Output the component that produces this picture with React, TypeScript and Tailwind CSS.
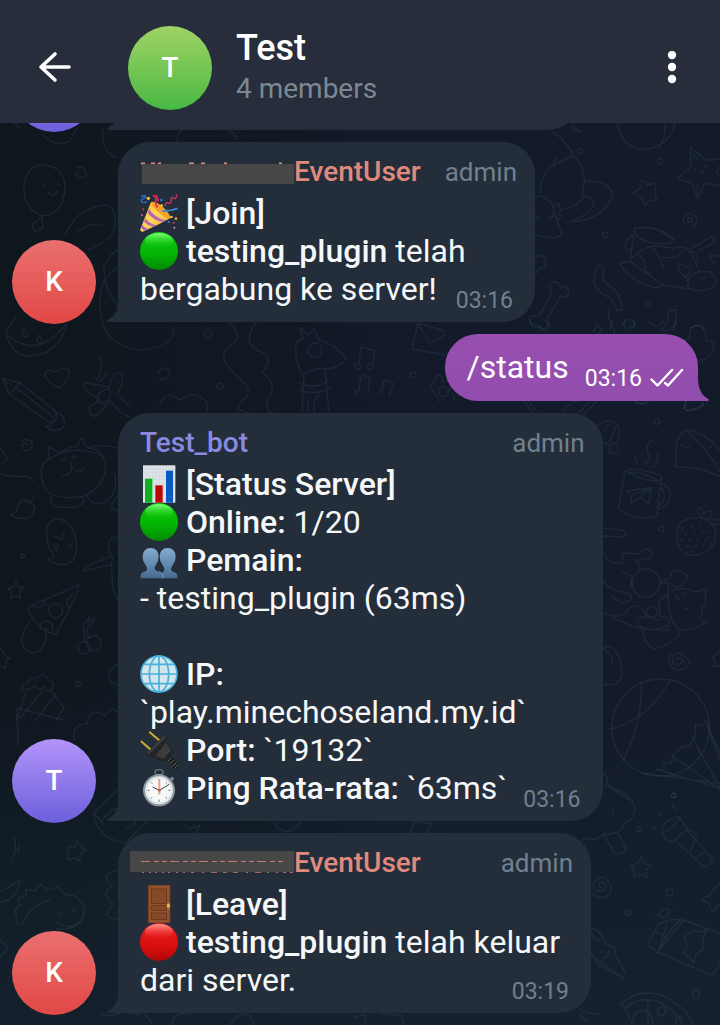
import type { ReactNode } from "react";

type AvatarTone = "red" | "violet" | "green";

const avatarTones: Record<AvatarTone, string> = {
  red: "from-[#ea6f6f] to-[#e14746]",
  violet: "from-[#b394f9] to-[#6d5fdb]",
  green: "from-[#9dd365] to-[#45b944]",
};

function Avatar({ letter, tone }: { letter: string; tone: AvatarTone }) {
  return (
    <div
      className={`flex size-21 shrink-0 items-center justify-center rounded-full bg-linear-to-b text-[28px] leading-8 font-medium text-white ${avatarTones[tone]}`}
    >
      {letter}
    </div>
  );
}

/* ---------- emoji ---------- */

function Emoji({ label, children }: { label: string; children: ReactNode }) {
  return (
    <svg role="img" aria-label={label} viewBox="0 0 114 114" className="mr-2 inline-block size-[38px] align-top">
      {children}
    </svg>
  );
}

function Party() {
  return (
    <Emoji label="party popper">
      <defs>
        <linearGradient id="cone" x1="0" y1="0" x2="1" y2="1">
          <stop offset="0" stopColor="#f7b92c" />
          <stop offset=".5" stopColor="#ffd75a" />
          <stop offset="1" stopColor="#e8961c" />
        </linearGradient>
      </defs>
      <path d="M33 24Q58 34 90 72Q70 86 8 113Q0 114 1 106Z" fill="url(#cone)" />
      <path d="M33 24Q48 20 72 42Q94 64 90 72Q82 78 58 57Q34 36 33 24Z" fill="#f0a22a" />
      <path d="M27 45Q45 72 76 79L68 84Q38 78 23 57ZM16 73Q28 89 48 94L39 99Q24 95 12 83ZM7 93Q13 101 24 105L15 110Q8 107 3 101Z" fill="#b565b8" />
      <path d="M52 41Q42 22 50 3M38 6Q52 4 55 22" stroke="#e8265e" strokeWidth="5" fill="none" />
      <path d="M67 51Q90 52 113 43" stroke="#3d83d8" strokeWidth="6" fill="none" />
      <path d="M3 8Q20 0 16 10Q0 18 5 24Q14 28 21 23" stroke="#2f74d4" strokeWidth="4" fill="none" />
      <path d="M75 37Q76 23 84 27Q90 32 94 21Q91 8 99 12Q109 18 111 2" stroke="#dc2d6d" strokeWidth="4" fill="none" />
      <circle cx="25" cy="13" r="5" fill="#f8c62e" />
      <circle cx="64" cy="18" r="4" fill="#2f74d4" />
      <circle cx="65" cy="35" r="4" fill="#f8c62e" />
      <circle cx="10" cy="46" r="3" fill="#e33d3d" />
      <circle cx="6" cy="63" r="3" fill="#d85bb2" />
      <circle cx="94" cy="69" r="4" fill="#f8c62e" />
      <circle cx="108" cy="74" r="4" fill="#e8a02a" />
      <circle cx="101" cy="86" r="3" fill="#e33d3d" />
      <circle cx="103" cy="101" r="3" fill="#d993dd" />
      <circle cx="86" cy="84" r="3" fill="#3d83d8" />
    </Emoji>
  );
}

function GreenDot() {
  return (
    <Emoji label="green circle">
      <defs>
        <linearGradient id="green-ball" x1="0" y1="0" x2="0" y2="1">
          <stop offset="0" stopColor="#0cc80c" />
          <stop offset=".55" stopColor="#02b602" />
          <stop offset="1" stopColor="#048a04" />
        </linearGradient>
        <linearGradient id="green-shine" x1="0" y1="0" x2="0" y2="1">
          <stop offset="0" stopColor="#7dff78" />
          <stop offset="1" stopColor="#0cc60c" stopOpacity="0" />
        </linearGradient>
      </defs>
      <circle cx="57" cy="57" r="57" fill="url(#green-ball)" />
      <ellipse cx="57" cy="27" rx="42" ry="24" fill="url(#green-shine)" />
    </Emoji>
  );
}

function RedDot() {
  return (
    <Emoji label="red circle">
      <defs>
        <linearGradient id="red-ball" x1="0" y1="0" x2="0" y2="1">
          <stop offset="0" stopColor="#ee1c1c" />
          <stop offset=".6" stopColor="#d90e0e" />
          <stop offset="1" stopColor="#b00808" />
        </linearGradient>
        <linearGradient id="red-shine" x1="0" y1="0" x2="0" y2="1">
          <stop offset="0" stopColor="#ff9a94" />
          <stop offset="1" stopColor="#ee2020" stopOpacity="0" />
        </linearGradient>
      </defs>
      <circle cx="57" cy="57" r="57" fill="url(#red-ball)" />
      <ellipse cx="57" cy="27" rx="42" ry="24" fill="url(#red-shine)" />
    </Emoji>
  );
}

function Chart() {
  return (
    <Emoji label="bar chart">
      <rect x="9" y="1" width="97" height="112" fill="#dfe5e8" />
      <path
        d="M19 1V113M29 1V113M39 1V113M49 1V113M59 1V113M69 1V113M79 1V113M89 1V113M99 1V113M9 11H106M9 22H106M9 33H106M9 44H106M9 55H106M9 66H106"
        stroke="#cbd5db"
        strokeWidth="2"
      />
      <rect x="15" y="41" width="22" height="72" fill="#0bb31f" />
      <rect x="46" y="61" width="22" height="52" fill="#bd0808" />
      <rect x="78" y="17" width="21" height="96" fill="#0a58c2" />
    </Emoji>
  );
}

function People() {
  return (
    <Emoji label="two people">
      <defs>
        <linearGradient id="bust" gradientUnits="userSpaceOnUse" x1="0" y1="20" x2="0" y2="112">
          <stop offset="0" stopColor="#86aed0" />
          <stop offset="1" stopColor="#446a90" />
        </linearGradient>
      </defs>
      <g fill="url(#bust)">
        <path d="M60 112H112V102Q110 95 98 92Q93 90 93 84Q94 78 98 73Q107 62 107 47Q106 21 83 21Q60 21 59 47Q59 62 68 73Q72 78 73 84Q73 90 68 92Z" />
        <path d="M2 112H72V102Q69 95 57 92Q46 90 44 84Q43 78 47 73Q56 62 56 47Q55 21 32 21Q9 21 8 47Q8 62 17 73Q21 78 21 84Q20 90 14 92Q3 95 2 102Z" />
      </g>
      <path d="M58 91L69 103V112" stroke="#9dbbd5" strokeWidth="2" fill="none" />
    </Emoji>
  );
}

function Globe() {
  return (
    <Emoji label="globe">
      <circle cx="57" cy="57" r="54" fill="#d3e6ec" />
      <circle cx="57" cy="57" r="54" fill="none" stroke="#4eb4dc" strokeWidth="5" />
      <g fill="none" stroke="#48b0da" strokeWidth="5">
        <path d="M57 2V112M4 57H110" />
        <ellipse cx="57" cy="57" rx="29" ry="54" />
        <path d="M13 28H101M13 86H101" />
      </g>
    </Emoji>
  );
}

function Plug() {
  return (
    <Emoji label="electric plug">
      <path d="M28 3L63 33M3 31L35 59" stroke="#c29a2d" strokeWidth="6" />
      <path d="M28 1L64 31M2 28L36 57" stroke="#efc95e" strokeWidth="2" />
      <path d="M75 10L18 69Q29 82 45 79L66 92Q78 94 84 85L99 70Q104 61 98 54L80 31Q84 20 75 10Z" fill="#242526" />
      <path d="M72 13L21 66L28 70L78 19ZM46 76L78 34L93 57L72 83Z" fill="#3b3c3d" />
      <path d="M81 87L93 75L114 100V113H104Z" fill="#191a1b" />
      <path d="M83 91L95 80M90 98L102 87M97 105L109 95M104 111L113 103" stroke="#6d6e70" strokeWidth="3" />
    </Emoji>
  );
}

function Stopwatch() {
  return (
    <Emoji label="stopwatch">
      <ellipse cx="57" cy="10" rx="12" ry="8" fill="none" stroke="#65747f" strokeWidth="4" />
      <path d="M50 15H64V23H50Z" fill="#a5b1b9" />
      <path d="M89 29L97 36L103 28L95 23Z" fill="#7b8992" />
      <circle cx="57" cy="64" r="45" fill="#e9edef" stroke="#8b989f" strokeWidth="6" />
      <circle cx="57" cy="64" r="38" fill="#f7f8f8" stroke="#c7ced2" strokeWidth="2" />
      <path d="M57 30V36M57 92V98M23 64H29M85 64H91M33 40L37 44M77 84L81 88M81 40L77 44M37 84L33 88" stroke="#66727a" strokeWidth="3" />
      <path d="M58 30V76" stroke="#eba190" strokeWidth="6" />
      <path d="M38 54L58 64L88 46" stroke="#3a4146" strokeWidth="3" fill="none" />
      <circle cx="58" cy="64" r="4" fill="#c95f4c" />
    </Emoji>
  );
}

function Door() {
  return (
    <Emoji label="door">
      <rect x="24" y="0" width="67" height="113" fill="#7c4425" />
      <rect x="28" y="4" width="59" height="109" fill="#945430" />
      <g fill="#874a29" stroke="#5c2f18" strokeWidth="2">
        <rect x="34" y="12" width="46" height="43" />
        <rect x="34" y="62" width="46" height="14" />
        <rect x="34" y="84" width="46" height="20" />
      </g>
      <rect x="81" y="52" width="9" height="22" rx="3" fill="#a9741e" />
      <circle cx="85" cy="62" r="5" fill="#f1c33f" />
    </Emoji>
  );
}

/* ---------- wallpaper ---------- */

function Wallpaper() {
  return (
    <svg
      aria-hidden="true"
      viewBox="0 123 720 902"
      preserveAspectRatio="xMidYMin slice"
      className="absolute inset-0 size-full"
      fill="none"
      stroke="#6487ad"
      strokeOpacity=".13"
      strokeLinecap="round"
      strokeLinejoin="round"
    >
      {/* left margin: melon, pencil, cat, ghost, pizza, cherries, cake */}
      <g transform="translate(0 300) scale(.33333)" strokeWidth="4.5">
        <path d="M18 102Q12 96 50 50M18 102Q110 185 198 72M18 102Q35 165 88 169Q175 163 200 75M72 88Q60 102 74 110Q94 112 72 88M117 106Q106 124 118 130Q136 129 117 106" />
        <path d="M7 235L60 248L172 338L152 370L29 283ZM60 248L29 283M48 262L158 350M172 338Q200 350 191 380Q165 405 135 377M165 333Q184 360 143 378M7 235L22 250" />
        <path d="M178 264Q140 248 134 225Q137 202 170 216Q188 198 207 209Q211 238 178 264Z" />
        <path d="M299 172Q313 207 290 242M318 219Q317 230 297 247M330 262L258 248Q242 258 264 278L300 300L270 318Q262 345 284 349Q300 345 330 300Q360 345 390 350M330 262Q330 235 344 222Q365 208 368 235Q365 260 352 285L390 318M304 275Q330 255 332 285Q315 320 296 304Q286 290 304 275Z" />
        <path d="M64 421Q98 412 97 440Q80 465 66 440Q72 424 85 436M0 445L25 476L4 494M0 522Q30 530 60 530Q90 525 100 543" />
        <path d="M124 520Q120 490 147 478L144 440L176 458Q205 440 230 441L245 414L260 443Q315 448 317 500Q313 560 253 588Q190 602 145 577Q123 553 124 520ZM147 478Q215 430 304 466M260 443Q330 425 390 460M153 588Q145 618 180 622Q250 627 252 598M263 585Q263 615 310 609Q355 584 346 524M185 475Q190 490 196 475M222 465Q214 478 230 470M210 485Q222 505 207 520Q190 532 186 524M215 498Q230 528 252 505M390 580Q340 585 335 620Q345 640 390 630" />
        <path d="M103 591Q85 620 76 598Q55 600 49 633L32 645Q55 660 84 654Q108 640 103 618Q92 605 76 600" />
        <path d="M143 720Q130 674 165 658Q205 652 225 704Q243 792 190 794Q155 795 142 773Q170 780 155 752Q144 745 143 720ZM162 731Q170 770 175 735M202 730Q214 756 217 726M163 708Q170 720 174 708M177 713Q183 728 190 712M184 702Q190 710 192 696" />
        <path d="M248 814Q260 795 332 770M248 814Q270 806 332 795M332 770Q320 738 331 719Q350 705 380 716M336 795Q333 875 356 902M332 770Q344 758 332 795" />
        <path d="M48 846L55 861L72 862L59 874L62 896L48 888L32 896L36 876L24 866L41 861Z" />
        <path d="M83 922L235 855Q244 862 167 1004Q98 980 83 922ZM97 916Q110 929 135 914Q138 902 128 900M120 990Q120 960 145 963Q165 975 155 1000M92 963Q60 1000 66 1032Q80 1065 113 1055Q150 1025 134 990Q136 984 145 986M220 882Q190 900 203 918L211 920" />
        <circle cx="167" cy="932" r="21" />
        <circle cx="68" cy="769" r="6" />
        <circle cx="234" cy="1151" r="7" />
        <circle cx="252" cy="1043" r="19" />
        <circle cx="281" cy="1029" r="22" />
        <path d="M252 1024L254 990Q240 978 270 952Q252 980 284 953Q285 965 260 983L265 1015M0 1045L24 1074L32 1074L20 1080L15 1104L0 1098M66 1168Q68 1150 82 1150Q88 1130 108 1136Q130 1112 145 1140Q165 1140 156 1168Q145 1180 130 1160Q118 1176 105 1158Q90 1170 66 1168M80 1170L50 1260M150 1170L192 1222L170 1260M106 1260L170 1180M60 1255L130 1170M355 1092Q310 1115 335 1147L355 1155" />
      </g>

      {/* lower-left and upper-left doodles */}
      <g strokeWidth="1.5">
        <path d="M24 184Q27 164 45 165Q66 168 65 190Q62 215 42 216Q22 208 24 184ZM42 217L32 225L35 232L43 228ZM48 192Q53 199 58 191M43 185L46 187M57 184L60 185M76 167Q88 166 86 176Q78 180 76 172" />
        <path d="M65 235Q78 206 108 205Q120 214 112 235Q100 245 88 250M78 232Q94 220 103 226M117 268Q97 280 100 310Q103 346 140 350Q176 348 174 326M118 306Q103 288 104 266Q112 252 118 250M14 123L20 128M43 135Q55 148 70 141L77 128M103 129Q101 150 115 158M177 142Q177 123 205 126Q233 124 236 139" />
        <path d="M228 322Q245 335 232 345Q213 355 237 376Q256 391 243 400Q231 410 250 413M256 323Q242 342 257 350Q277 357 262 372Q279 385 268 399Q265 410 272 413M158 374Q162 363 170 372Q167 382 159 378M160 405Q165 388 180 400Q194 388 208 403L207 412" />
        <path d="M296 342L303 339L300 328L309 335L314 329L319 340Q335 344 346 358Q341 370 317 369L302 374Q294 360 296 342ZM304 374L302 412M325 371L329 412M300 383Q315 391 329 380M300 390Q315 396 330 388M314 412V401L319 395M308 412V402" />
        <circle cx="315" cy="350" r="7" />
        <circle cx="208" cy="334" r="4" />
        <circle cx="220" cy="386" r="3" />
        <circle cx="413" cy="375" r="3" />
        <path d="M359 363L361 347L375 351L373 364M359 363Q351 362 357 369Q363 370 359 363M373 364Q366 363 368 369Q375 370 373 364M359 390L361 375L370 377L368 392M359 390Q352 390 357 396M381 394L384 380L393 383L389 397M412 349L418 323L445 331M412 349L445 355M418 323L429 343L445 335" />
        <path d="M75 740Q70 724 87 724Q91 705 105 716Q112 704 118 713M17 708L64 720M17 708L18 745M104 825L94 813L118 790M94 813Q96 838 125 843L147 822M102 820Q118 800 135 812Q141 824 126 829" />
        <path d="M77 839L81 847L86 850L80 854L80 861L74 858L68 860L69 853L67 847L75 847ZM11 861Q18 850 14 838M19 844L18 852M0 892L20 880Q18 900 0 902M0 940L8 947L0 957M118 870Q98 875 112 886Q99 895 114 904Q98 918 118 919" />
        <path d="M18 925L15 910L20 905L18 898L26 896L26 889L35 891L40 884L48 890L58 887L64 894L75 896Q89 907 82 920Q75 930 57 929L65 940M22 925Q30 905 50 900M56 922Q72 932 82 919" />
        <circle cx="60" cy="914" r="2" />
        <circle cx="74" cy="910" r="2" />
        <path d="M183 824L190 829L200 825L196 833L202 837M274 822Q280 835 293 830L300 822M410 833L414 822L432 823L427 833M102 1014Q112 1018 122 1012L140 1014M145 1014L152 1023M172 1025Q174 1010 190 1014M230 1025Q240 1010 250 1016L254 1025M355 1017L365 1014L366 1025M382 1014L401 1015L404 1025" />
      </g>

      {/* upper right */}
      <g transform="translate(520 120) scale(.33333)" strokeWidth="4.5">
        <path d="M95 33Q140 60 160 108Q195 135 193 184Q270 180 277 225Q255 300 150 305Q217 282 221 245Q210 225 188 231Q180 255 128 270M193 184L188 225M160 108Q115 125 100 138M108 110L103 129Q62 160 60 220M45 228Q100 225 108 295L125 340Q115 365 45 343M100 290L102 255L118 250L115 263L124 267L116 280L125 288L114 298M46 285Q52 310 56 284M86 286Q94 310 98 284" />
        <path d="M292 8Q305 90 378 88Q455 75 464 8M432 8Q440 45 420 78M157 12L180 36M150 20L176 36" />
        <path d="M372 182L381 194L408 190L404 212L410 241L389 241L374 256L364 231L336 219L360 207L360 184Z" />
        <path d="M510 82L560 121L600 116M510 82L512 140L472 177L516 188L532 235L553 190L600 198M515 100L535 120M532 220V195M525 145L527 154M556 136L558 145M541 155Q547 163 553 155M600 140L588 155L600 165" />
        <path d="M504 310Q498 290 517 296Q520 310 506 306M494 315Q480 286 514 281Q545 295 518 322" />
        <path d="M343 325Q410 314 464 358Q450 380 385 367Q340 350 343 325ZM348 325Q405 310 460 360M340 345L332 415M337 348Q310 360 317 388L332 390M335 415Q365 382 402 377L460 385M355 405Q378 420 375 445Q380 460 392 461M301 430L330 425L430 495L512 508M301 430Q320 480 405 503L430 495M395 378Q422 415 431 447M423 413L470 412L495 385Q525 405 536 455M455 385Q490 375 505 390L575 350Q590 355 583 366L535 393M510 395Q540 395 532 425M495 472Q462 440 478 432Q495 430 496 440Q517 435 507 460L495 472L505 485M585 433Q560 405 576 403L586 410Q600 402 600 410M507 475Q520 450 570 455Q600 480 580 500Q535 525 503 500ZM536 472Q545 482 554 472" />
        <path d="M236 436L252 445Q240 480 265 495Q307 520 305 571L290 570Q285 538 245 520Q205 490 236 436ZM92 490L105 485Q120 487 120 500L135 500Q150 508 145 525Q135 535 122 528L82 595Q90 615 75 627Q60 632 55 615L35 613Q25 600 34 588L58 586L95 520Q85 505 92 490ZM267 570L265 595L275 605L270 630M308 613Q320 590 340 603Q350 620 335 630M446 571L470 570Q470 610 460 630M446 571L442 605L425 630M510 625Q530 608 552 625M45 410L68 405L78 420L72 425L77 444L60 442L45 465" />
        <circle cx="180" cy="93" r="8" />
        <circle cx="421" cy="124" r="8" />
        <circle cx="256" cy="345" r="8" />
        <circle cx="385" cy="553" r="6" />
      </g>

      {/* around the outgoing bubble */}
      <g transform="translate(430 320) scale(.33333)" strokeWidth="4.5">
        <path d="M770 80Q745 60 780 55Q775 20 803 15Q830 20 828 62Q860 60 850 90Q835 125 800 120M770 80L765 60M795 40V43M815 118L818 130M700 35Q740 25 738 0M765 270Q760 245 780 235M765 270Q800 275 820 250M30 245L0 200L15 180L20 165Q35 160 40 185Q70 170 68 195L55 210Q80 230 70 240M300 0Q300 25 330 20Q345 45 358 20Q355 5 345 0M585 0Q575 30 600 25Q625 10 610 0M600 15L605 20M650 0Q690 35 700 0M490 35L500 15L515 30L505 40M545 5L555 40M280 242L310 280M295 242L320 275M400 275Q420 245 445 242M480 242L440 285L455 290L500 245M615 243Q640 260 660 243" />
        <circle cx="40" cy="215" r="15" />
      </g>

      {/* right margin */}
      <g transform="translate(580 400) scale(.33333)" strokeWidth="4.5">
        <path d="M48 80Q75 55 103 67Q125 82 116 115Q107 135 88 135L68 125M85 73L72 95M107 80L88 127M90 135L88 160L99 158L103 162L115 159L110 135M160 0Q180 22 205 0M320 0L312 25L325 33L370 18L365 0M290 195Q278 105 320 90Q380 100 420 150M290 195Q275 195 290 202Q355 198 420 229M320 92Q385 150 420 215M304 134Q315 148 329 137M385 145L395 136" />
        <path d="M136 212L116 325Q160 365 230 348L244 232M136 212Q160 200 230 221Q255 230 242 240Q200 252 136 212ZM148 218Q190 215 230 240M242 250Q285 265 265 305Q250 325 232 328M240 262Q270 290 235 318M140 272L214 263L207 311L180 292L155 311L154 286ZM154 286L214 263L180 292M167 195Q175 185 162 180L167 170M193 194L211 173Q190 145 213 122M219 202Q230 190 235 180Q225 170 236 161" />
        <path d="M291 400Q290 365 325 357Q390 340 408 397Q410 455 345 466Q286 465 291 400ZM367 353Q342 330 356 324Q366 320 370 345Q390 325 396 338Q397 360 367 355M390 360L420 360M390 374L420 372" />
        <path d="M310 380L307 388M337 377L331 382M361 375L356 379M320 400L314 404M345 396L340 401M372 394L367 399M393 395L388 400M307 417L302 423M331 418L326 424M357 414L352 421M382 414L377 421M322 438L316 443M349 437L344 442M373 432L367 439M393 429L389 436M337 453L331 458" />
        <path d="M69 384L125 390Q147 403 125 410L69 409M69 460L95 490L132 488L126 463Q134 456 175 463Q194 442 213 450Q225 468 205 475L165 482Q182 490 176 506M69 545L100 570L150 582Q163 602 130 607Q110 607 95 587M69 637Q130 665 150 620Q190 610 198 650L238 661M100 652Q175 698 270 690M150 570L155 540M125 512L155 530M188 690Q190 735 225 747Q265 735 300 705Q300 695 290 687M243 540Q280 535 272 522Q290 498 325 530Q310 555 292 563L255 541M265 570Q260 690 320 690Q365 682 372 662Q390 660 380 670L365 675M275 570Q325 560 340 576L380 568L377 580L376 617L365 620Q370 640 361 657M240 548Q280 545 260 584L236 605L240 650Q275 650 265 677Q210 700 175 675Q165 650 200 650M286 587L302 604M308 582L320 580M314 626L327 627" />
        <circle cx="198" cy="549" r="42" />
        <circle cx="215" cy="635" r="16" />
        <path d="M69 745Q102 765 97 792M69 853Q140 865 121 790Q112 730 69 742M288 780Q303 767 310 784Q290 807 278 785Q270 760 300 760Q340 778 320 803Q278 825 266 780Q266 765 272 760M420 750L405 770L393 768L405 785L400 800L420 795" />
        <circle cx="242" cy="983" r="146" />
        <path d="M183 847Q190 960 129 1083M270 840Q205 960 88 988M230 1110L252 1110L252 1090L285 1085L278 1065L310 1038Q330 1045 345 1010Q347 995 346 970Q355 985 380 963M190 1120L420 1150M230 1108L420 1165M272 1065L420 1168M334 1005L420 1165M378 965L420 1060M386 990L420 1080M69 1120Q90 1130 77 1155L150 1200" />
        <circle cx="231" cy="65" r="8" />
        <circle cx="244" cy="387" r="8" />
        <circle cx="281" cy="1186" r="6" />
      </g>

      {/* lower right: flashlight, chocolate, pizza */}
      <g transform="translate(580 780) scale(.33333)" strokeWidth="4.5">
        <path d="M83 10L100 25Q160 45 165 90Q160 125 130 130Q130 155 100 160Q85 165 72 160Q55 185 20 175L0 185M72 165L105 222Q130 225 137 207L115 160M97 88Q103 98 98 100" />
        <path d="M246 157Q250 115 298 110L322 147L282 183Q255 190 246 157ZM246 157Q265 158 300 113M285 180L365 255Q380 270 398 238L320 150M325 150Q345 150 350 175M345 175L330 215M375 212L345 237M278 70L286 92M235 98L246 107M215 142L229 148" />
        <path d="M184 229L194 250L215 259L197 270L200 291L182 283L162 291L163 270L153 256L175 250Z" />
        <path d="M67 322Q55 320 58 310Q75 300 78 325Q50 345 40 320Q45 285 75 295Q110 330 80 348Q55 360 38 340M33 445Q62 450 75 485M33 455Q40 480 60 482M33 525L60 545L131 595M33 515L55 555L125 590M75 490L105 505L105 520L135 577M60 520L65 515M70 535Q85 530 90 510M85 515V518" />
        <path d="M420 310Q395 330 390 347Q365 350 369 363L388 370Q390 395 405 392Q410 375 420 375M237 430L202 495L230 515L390 584Q410 580 420 545M237 430L280 418L310 420L420 460M310 420L228 523M300 420Q260 455 235 515M228 455L258 472M260 430L235 515M380 446Q365 480 368 510L348 520L340 550L325 525Q315 530 310 515L325 503L318 485Q310 460 320 457Q335 465 345 452L360 457L380 446M237 405Q245 380 265 388Q275 400 255 410Q245 415 237 405ZM286 390V391M228 405V406" />
        <path d="M122 673Q205 600 300 680Q335 710 338 735M122 673L135 685Q205 630 275 690Q300 710 305 735M135 685L158 735M204 659V735M160 730Q155 695 190 690Q220 700 218 735M235 700Q225 680 240 684Q252 675 260 690Q250 705 245 710ZM288 735Q285 710 298 710L305 722M0 685Q20 705 55 700M0 705L20 722" />
        <circle cx="281" cy="46" r="7" />
        <circle cx="176" cy="147" r="7" />
        <circle cx="269" cy="338" r="10" />
        <circle cx="143" cy="398" r="8" />
        <circle cx="348" cy="641" r="10" />
      </g>
    </svg>
  );
}

/* ---------- messages ---------- */

function Bubble({ children, className = "" }: { children?: ReactNode; className?: string }) {
  return (
    <div className={`relative rounded-t-[32px] rounded-br-[32px] bg-[#232e3a] px-[22px] pt-3 pb-[14px] ${className}`}>
      <svg aria-hidden="true" viewBox="0 0 22 20" className="absolute bottom-0 -left-[11px] h-5 w-[22px]">
        <path d="M11 0C11 9 8 14 1 17.8Q-.5 19 1 20H22V0Z" fill="#232e3a" />
      </svg>
      {children}
    </div>
  );
}

function Incoming({ letter, tone, children }: { letter: string; tone: AvatarTone; children: ReactNode }) {
  return (
    <article className="flex items-end gap-[22px]">
      <div className="-mb-0.5">
        <Avatar letter={letter} tone={tone} />
      </div>
      {children}
    </article>
  );
}

function Sender({ children, className }: { children: ReactNode; className: string }) {
  return (
    <header className="-mr-1 mb-1 flex h-9 items-center justify-between gap-6 text-[28px] leading-9">
      <h2 className={`flex items-center font-medium ${className}`}>{children}</h2>
      <span className="text-[26px] text-[#71808e]">admin</span>
    </header>
  );
}

function Time({ children }: { children: ReactNode }) {
  return <time className="-mb-1 shrink-0 text-[23px] leading-[22px] text-[#71808e]">{children}</time>;
}

function CensoredTop() {
  return (
    <svg role="img" aria-label="hidden name" viewBox="0 0 154 36" className="h-9 w-[154px]">
      <path d="M1 9.5H5M11 9.5H15M18 9.5H21M49 9.5H54M61 9.5H65M84 9.5H87M139 9.5H142" stroke="#e08a7e" strokeWidth="2" />
      <rect x="2" y="10" width="152" height="20" fill="#474747" />
    </svg>
  );
}

function CensoredMiddle() {
  return (
    <svg role="img" aria-label="hidden name" viewBox="0 0 154 36" className="h-9 w-[154px] overflow-visible">
      <path
        d="M2 27H4M9 27H11M15 27H17M22 27H24M28 27H30M36 27H38M43 27H45M51 27H54M62 27H64M71 27H77M83 27H87M93 27H98M106 27H108M115 27H121M127 27H129M136 27H138M143 27H146M150 27H153"
        stroke="#a9675f"
        strokeWidth="2"
      />
      <rect x="-10" y="6" width="164" height="21" fill="#474747" />
      <path d="M1 16.5H145" stroke="#c47c72" strokeWidth="1" strokeDasharray="9 4 5 3 5 3" />
    </svg>
  );
}

export default function App() {
  return (
    <div className="flex min-h-screen flex-col overflow-hidden bg-[#131b28] font-['Roboto','Liberation_Sans',sans-serif] text-[#f5f7f9]">
      <header className="relative z-10 flex h-[123px] items-center bg-[#272d3a] pt-3 pr-6 pl-9">
        <button type="button" aria-label="Back" className="mr-14 size-9">
          <svg viewBox="0 0 36 36" className="size-9" fill="none" stroke="#fff" strokeWidth="3.6" strokeLinecap="round" strokeLinejoin="round">
            <path d="M33 17H5M19 4L5 17L19 30" />
          </svg>
        </button>
        <Avatar letter="T" tone="green" />
        <div className="ml-6 flex-1">
          <h1 className="text-[36px] leading-[42px] font-medium text-white">Test</h1>
          <p className="text-[28px] leading-10 text-[#7b8994]">4 members</p>
        </div>
        <button type="button" aria-label="More options" className="flex size-12 items-center justify-center">
          <svg viewBox="0 0 10 34" className="h-[34px] w-2.5" fill="#fff">
            <circle cx="5" cy="4" r="4.2" />
            <circle cx="5" cy="16" r="4.2" />
            <circle cx="5" cy="28" r="4.2" />
          </svg>
        </button>
      </header>

      <main className="relative flex-1 bg-[linear-gradient(to_right,#0f171e_8%,#131a2a_65%)]">
        <div className="absolute inset-0 bg-linear-to-b from-transparent from-60% to-[#152330]/80" />
        <Wallpaper />
        <section aria-label="Messages" className="relative -mt-[77px] flex flex-col gap-3 px-3 pb-3 text-[32px] leading-[38px]">
          <div className="flex h-21 items-end">
            <Incoming letter="T" tone="violet">
              <Bubble className="h-16 w-[462px]" />
            </Incoming>
          </div>

          <Incoming letter="K" tone="red">
            <Bubble>
              <Sender className="text-[#e08a7e]">
                <CensoredTop />
                EventUser
              </Sender>
              <p>
                <Party />
                <b className="font-medium">[Join]</b>
              </p>
              <p>
                <GreenDot />
                <b className="font-medium">testing_plugin</b> telah
              </p>
              <div className="flex items-end justify-between gap-4">
                <p>bergabung ke server!</p>
                <Time>03:16</Time>
              </div>
            </Bubble>
          </Incoming>

          <article className="relative mr-[10px] flex items-end self-end rounded-t-[33px] rounded-bl-[33px] bg-linear-to-b from-[#984fb0] to-[#914dad] pt-[14px] pr-[14px] pb-[15px] pl-[22px]">
            <svg aria-hidden="true" viewBox="0 0 22 24" className="absolute -right-[11px] bottom-0 h-6 w-[22px]">
              <path d="M11 0C11 11 14 18 21 21.8Q22.5 23 21 24H0V0Z" fill="#914dad" />
            </svg>
            <p className="mr-4 text-white">/status</p>
            <time className="-mb-1 text-[23px] leading-[22px] text-white">03:16</time>
            <svg
              role="img"
              aria-label="Read"
              viewBox="0 0 34 20"
              className="-mb-0.5 ml-2 h-5 w-[34px]"
              fill="none"
              stroke="#fff"
              strokeWidth="2.4"
              strokeLinecap="round"
              strokeLinejoin="round"
            >
              <path d="M1.5 11.5L7.5 17.5L22 2M15 15L18 17.5L32 2" />
            </svg>
          </article>

          <Incoming letter="T" tone="violet">
            <Bubble>
              <Sender className="text-[#8b89e0]">Test_bot</Sender>
              <p>
                <Chart />
                <b className="font-medium">[Status Server]</b>
              </p>
              <p>
                <GreenDot />
                <b className="font-medium">Online:</b> 1/20
              </p>
              <p>
                <People />
                <b className="font-medium">Pemain:</b>
              </p>
              <p className="mb-[38px]">- testing_plugin (63ms)</p>
              <p>
                <Globe />
                <b className="font-medium">IP:</b>
              </p>
              <p>`play.minechoseland.my.id`</p>
              <p>
                <Plug />
                <b className="font-medium">Port:</b> `19132`
              </p>
              <div className="flex items-end justify-between gap-4">
                <p>
                  <Stopwatch />
                  <b className="font-medium">Ping Rata-rata:</b> `63ms`
                </p>
                <Time>03:16</Time>
              </div>
            </Bubble>
          </Incoming>

          <Incoming letter="K" tone="red">
            <Bubble className="min-w-[473px]">
              <Sender className="text-[#e08a7e]">
                <CensoredMiddle />
                EventUser
              </Sender>
              <p>
                <Door />
                <b className="font-medium">[Leave]</b>
              </p>
              <p>
                <RedDot />
                <b className="font-medium">testing_plugin</b> telah keluar
              </p>
              <div className="flex items-end justify-between gap-4">
                <p>dari server.</p>
                <Time>03:19</Time>
              </div>
            </Bubble>
          </Incoming>
        </section>
      </main>
    </div>
  );
}
